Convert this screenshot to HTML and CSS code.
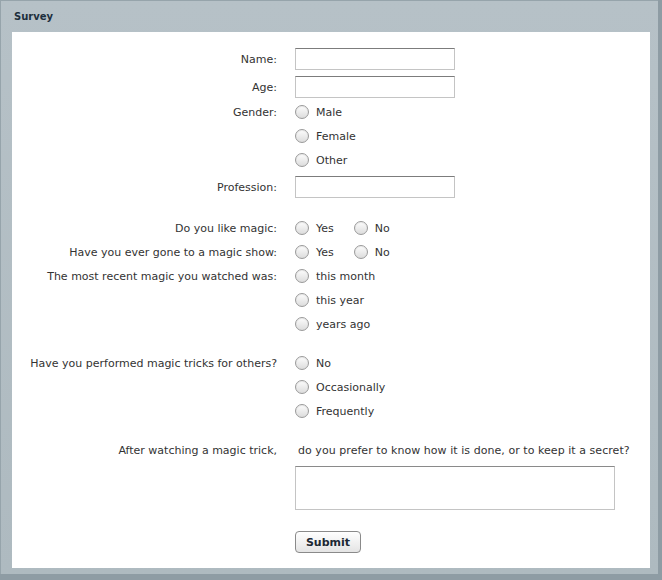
FILE: index.html
```html
<!DOCTYPE html>
<html lang="en">
<head>
    <meta charset="UTF-8">
    <title>Survey</title>
    <link rel="stylesheet" href="styles.css">
</head>
<body>
    <div class="panel">
        <div class="panel-title">Survey</div>

        <form class="survey">
            <div class="row">
                <label class="label" for="name">Name:</label>
                <div class="field"><input type="text" id="name" class="text"></div>
            </div>

            <div class="row row-age">
                <label class="label" for="age">Age:</label>
                <div class="field"><input type="text" id="age" class="text"></div>
            </div>

            <div class="row row-gender">
                <span class="label line">Gender:</span>
                <div class="options">
                    <label class="option"><input type="radio" name="gender"> Male</label>
                    <label class="option"><input type="radio" name="gender"> Female</label>
                    <label class="option"><input type="radio" name="gender"> Other</label>
                </div>
            </div>

            <div class="row row-profession">
                <label class="label" for="profession">Profession:</label>
                <div class="field"><input type="text" id="profession" class="text"></div>
            </div>

            <div class="row row-magic">
                <span class="label line">Do you like magic:</span>
                <div class="options inline">
                    <label class="option"><input type="radio" name="like"> Yes</label>
                    <label class="option"><input type="radio" name="like"> No</label>
                </div>
            </div>

            <div class="row">
                <span class="label line">Have you ever gone to a magic show:</span>
                <div class="options inline">
                    <label class="option"><input type="radio" name="show"> Yes</label>
                    <label class="option"><input type="radio" name="show"> No</label>
                </div>
            </div>

            <div class="row">
                <span class="label line">The most recent magic you watched was:</span>
                <div class="options">
                    <label class="option"><input type="radio" name="recent"> this month</label>
                    <label class="option"><input type="radio" name="recent"> this year</label>
                    <label class="option"><input type="radio" name="recent"> years ago</label>
                </div>
            </div>

            <div class="row row-spaced">
                <span class="label line">Have you performed magic tricks for others?</span>
                <div class="options">
                    <label class="option"><input type="radio" name="performed"> No</label>
                    <label class="option"><input type="radio" name="performed"> Occasionally</label>
                    <label class="option"><input type="radio" name="performed"> Frequently</label>
                </div>
            </div>

            <div class="row row-spaced">
                <label class="label line" for="secret">After watching a magic trick,</label>
                <div class="field">
                    <div class="line question">do you prefer to know how it is done, or to keep it a secret?</div>
                    <textarea id="secret" class="area"></textarea>
                </div>
            </div>

            <div class="row row-submit">
                <span class="label"></span>
                <div class="field"><button type="submit" class="button">Submit</button></div>
            </div>
        </form>
    </div>
</body>
</html>
```

FILE: styles.css
```css
/* Fondo y marco exterior */
body {
    margin: 0;
    padding: 0;
    background-color: #8e9ca4;
    font-family: 'DejaVu Sans', Verdana, sans-serif;
    font-size: 11px;
    color: #333;
    width: 662px;
    height: 580px;
    overflow: hidden;
}

/* Panel gris */
.panel {
    width: 658px;
    height: 574px;
    box-sizing: border-box;
    padding: 0 8px 6px 11px;
    background: linear-gradient(#b6c1c7, #aebac0);
    border-top: 1px solid #96a4ab;
    border-left: 1px solid #96a4ab;
    display: flex;
    flex-direction: column;
}

.panel-title {
    height: 31px;
    line-height: 31px;
    margin-left: -11px;
    padding-left: 13px;
    font-weight: bold;
    font-size: 10px;
    color: #1d2f3d;
}

/* Contenido blanco */
.survey {
    flex: 1;
    background-color: #fff;
    padding-top: 16px;
}

.row {
    display: grid;
    grid-template-columns: 265px 1fr;
    column-gap: 18px;
    margin-bottom: 6px;
}

/* Etiquetas: 22px de alto junto a un campo, 24px junto a una opción */
.label {
    text-align: right;
    line-height: 20px;
    padding-top: 2px;
}

.line {
    line-height: 22px;
    padding-top: 2px;
}

.row-age {
    margin-bottom: 2px;
}

.row-gender {
    margin-bottom: 4px;
}

.row-profession {
    margin-bottom: 18px;
}

.row-magic,
.row-magic + .row,
.row-magic + .row + .row {
    margin-bottom: 0;
}

.row-spaced {
    margin-top: 15px;
    margin-bottom: 0;
}

.row-submit {
    margin-top: 21px;
}

/* Campos */
.text {
    display: block;
    width: 160px;
    height: 22px;
    box-sizing: border-box;
    margin: 0;
    border: 1px solid #c4c4c4;
    border-top-color: #7c7c7c;
    background: #fff;
    outline: none;
}

.area {
    display: block;
    width: 320px;
    height: 44px;
    box-sizing: border-box;
    margin: 4px 0 0 0;
    border: 1px solid #c4c4c4;
    border-top-color: #8a8a8a;
    resize: none;
    outline: none;
}

.question {
    padding-left: 3px;
    letter-spacing: 0.05px;
}

/* Opciones de radio */
.options {
    display: flex;
    flex-direction: column;
}

.options.inline {
    flex-direction: row;
    gap: 20px;
}

.option {
    display: flex;
    align-items: center;
    height: 24px;
    gap: 7px;
}

.option input {
    appearance: none;
    -webkit-appearance: none;
    width: 14px;
    height: 14px;
    margin: 0;
    border-radius: 50%;
    border: 1px solid #9a9a9a;
    background: linear-gradient(#fdfdfd, #dcdcdc);
    box-shadow: inset 0 1px 1px rgba(0, 0, 0, 0.08);
}

/* Botón */
.button {
    width: 66px;
    height: 22px;
    padding: 0;
    border: 1px solid #8a8a8a;
    border-radius: 4px;
    background: linear-gradient(#ffffff, #e4e4e4);
    font-family: 'DejaVu Sans', Verdana, sans-serif;
    font-weight: bold;
    font-size: 11px;
    color: #1c2833;
}
```
